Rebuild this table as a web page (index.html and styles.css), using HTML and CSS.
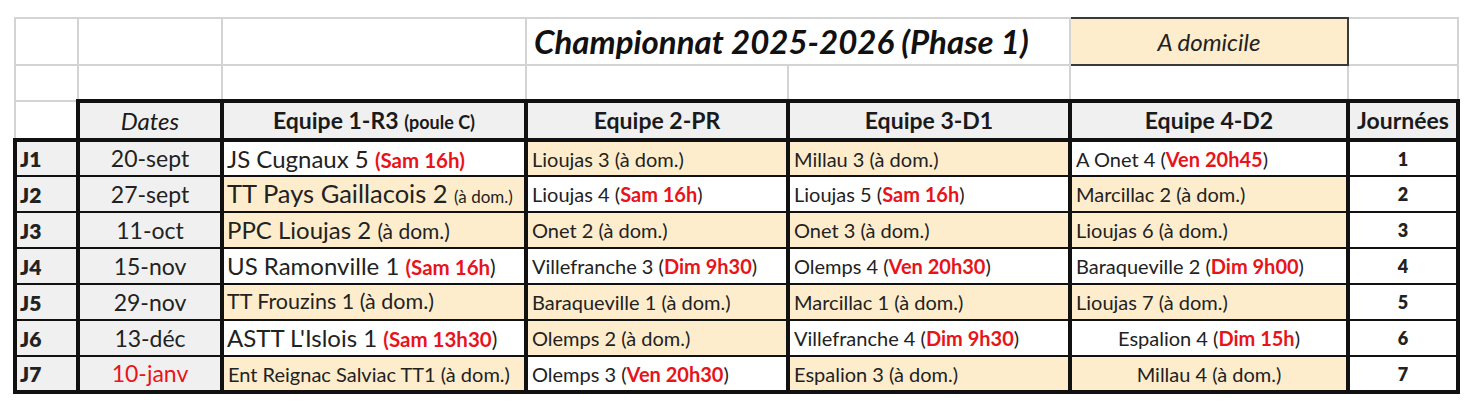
FILE: index.html
```html
<!DOCTYPE html>
<html lang="fr">
<head>
<meta charset="utf-8">
<title>Championnat 2025-2026 (Phase 1)</title>
<link rel="stylesheet" href="styles.css">
</head>
<body>
<table class="sheet">
  <colgroup>
    <col class="c-a"><col class="c-b"><col class="c-c"><col class="c-d"><col class="c-e"><col class="c-f"><col class="c-g">
  </colgroup>
  <tr class="top1">
    <td class="g"></td><td class="g"></td><td class="g"></td>
    <td class="g title" colspan="2">Championnat 2025-2026 (Phase 1)</td>
    <td class="legend">A domicile</td>
    <td class="g"></td>
  </tr>
  <tr class="top2">
    <td class="g"></td><td class="g"></td><td class="g"></td><td class="g"></td><td class="g"></td><td class="g"></td><td class="g"></td>
  </tr>
  <tr class="head">
    <td class="g corner"></td>
    <th class="h it">Dates</th>
    <th class="h">Equipe 1-R3 <span class="sm">(poule C)</span></th>
    <th class="h">Equipe 2-PR</th>
    <th class="h">Equipe 3-D1</th>
    <th class="h">Equipe 4-D2</th>
    <th class="h">Journées</th>
  </tr>
  <tr class="row">
    <td class="j">J1</td><td class="d">20-sept</td>
    <td class="big">JS Cugnaux 5 <b class="t tb">(Sam 16h)</b></td>
    <td class="home">Lioujas 3 (à dom.)</td>
    <td class="home">Millau 3 (à dom.)</td>
    <td>A Onet 4 (<b class="t">Ven 20h45</b>)</td>
    <td class="n">1</td>
  </tr>
  <tr class="row">
    <td class="j">J2</td><td class="d">27-sept</td>
    <td class="big wide home">TT Pays Gaillacois 2 <span class="sm3">(à dom.)</span></td>
    <td>Lioujas 4 (<b class="t">Sam 16h</b>)</td>
    <td>Lioujas 5 (<b class="t">Sam 16h</b>)</td>
    <td class="home">Marcillac 2 (à dom.)</td>
    <td class="n">2</td>
  </tr>
  <tr class="row">
    <td class="j">J3</td><td class="d">11-oct</td>
    <td class="big home">PPC Lioujas 2 <span class="sm2">(à dom.)</span></td>
    <td class="home">Onet 2 (à dom.)</td>
    <td class="home">Onet 3 (à dom.)</td>
    <td class="home">Lioujas 6 (à dom.)</td>
    <td class="n">3</td>
  </tr>
  <tr class="row">
    <td class="j">J4</td><td class="d">15-nov</td>
    <td class="big">US Ramonville 1 <span class="sm2"><b class="t tb">(Sam 16h</b>)</span></td>
    <td>Villefranche 3 (<b class="t">Dim 9h30</b>)</td>
    <td>Olemps 4 (<b class="t">Ven 20h30</b>)</td>
    <td>Baraqueville 2 (<b class="t">Dim 9h00</b>)</td>
    <td class="n">4</td>
  </tr>
  <tr class="row">
    <td class="j">J5</td><td class="d">29-nov</td>
    <td class="home mid">TT Frouzins 1 (à dom.)</td>
    <td class="home">Baraqueville 1 (à dom.)</td>
    <td class="home">Marcillac 1 (à dom.)</td>
    <td class="home">Lioujas 7 (à dom.)</td>
    <td class="n">5</td>
  </tr>
  <tr class="row">
    <td class="j">J6</td><td class="d">13-déc</td>
    <td class="big">ASTT L'Islois 1 <span class="sm2"><b class="t tb">(Sam 13h30</b>)</span></td>
    <td class="home">Olemps 2 (à dom.)</td>
    <td>Villefranche 4 (<b class="t">Dim 9h30</b>)</td>
    <td class="ctr">Espalion 4 (<b class="t">Dim 15h</b>)</td>
    <td class="n">6</td>
  </tr>
  <tr class="row last">
    <td class="j">J7</td><td class="d red">10-janv</td>
    <td class="home">Ent Reignac Salviac TT1 (à dom.)</td>
    <td>Olemps 3 (<b class="t">Ven 20h30</b>)</td>
    <td class="home">Espalion 3 (à dom.)</td>
    <td class="home ctr">Millau 4 (à dom.)</td>
    <td class="n">7</td>
  </tr>
</table>
</body>
</html>
```

FILE: styles.css
```css
html, body {
  margin: 0;
  padding: 0;
  background: #ffffff;
}
body {
  padding: 17px 0 0 13px;
  font-family: Lato, "Open Sans", "Liberation Sans", sans-serif;
  color: #1a1a1a;
}
.sheet {
  border-collapse: collapse;
  table-layout: fixed;
  width: 1443px;
}
.c-a { width: 63px; }
.c-b { width: 144px; }
.c-c { width: 304px; }
.c-d { width: 262px; }
.c-e { width: 282px; }
.c-f { width: 278px; }
.c-g { width: 110px; }

td, th {
  padding: 0 4px;
  white-space: nowrap;
  overflow: hidden;
  line-height: 1;
}
.top1 { height: 47px; }
.top2 { height: 36px; }
.head { height: 39px; }
.row { height: 36px; }

.g {
  border: 2px solid #d4d4d4;
}
.title {
  font-weight: 700;
  font-style: italic;
  font-size: 33px;
  text-align: left;
  padding-left: 7px;
  color: #111;
}
.legend {
  background: #fdedcd;
  border: 2px solid #3a3a3a;
  font-style: italic;
  font-size: 24px;
  text-align: center;
  color: #222;
}
.corner {
  border-bottom: 4px solid #111;
}
.h {
  border: 4px solid #111;
  background: #f0f0f0;
  font-weight: 700;
  font-size: 23px;
  text-align: center;
  color: #1a1a1a;
}
.h.it {
  font-weight: 400;
  font-style: italic;
  font-size: 24px;
}
.sm {
  font-size: 18px;
}
.row td {
  border-top: 2px solid #111;
  border-bottom: 2px solid #111;
  border-left: 4px solid #111;
  border-right: 4px solid #111;
  font-size: 20px;
  text-align: left;
  color: #222;
}
.row.last td {
  border-bottom: 4px solid #111;
}
.row td.j {
  background: #f0f0f0;
  font-weight: 800;
  font-size: 21px;
  padding-left: 3px;
}
.row td.d {
  background: #f0f0f0;
  text-align: center;
  font-size: 23px;
}
.row td.d.red {
  color: #e8141a;
}
.row td.big {
  font-size: 24px;
  padding-left: 3px;
}
.row td.big.wide {
  font-size: 25.5px;
}
.row td.mid {
  font-size: 21.5px;
  padding-left: 3px;
}
.row td.home {
  background: #fdedcd;
}
.row td.ctr {
  text-align: center;
}
.row td.n {
  text-align: center;
  font-weight: 800;
  font-size: 18px;
}
.t {
  color: #e8141a;
  font-weight: 700;
  font-size: 20px;
}
.t.tb {
  font-size: 20.5px;
}
.sm2 {
  font-size: 21px;
}
.sm3 {
  font-size: 17px;
}
```
